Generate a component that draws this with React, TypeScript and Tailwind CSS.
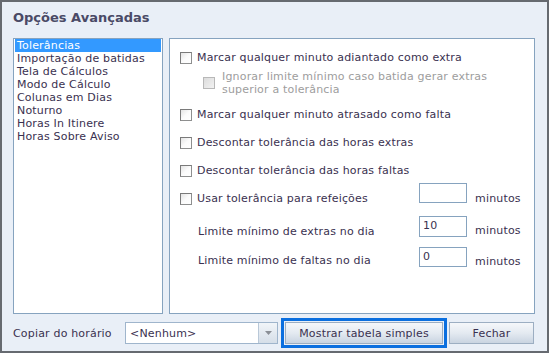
import React from "react";

const font = { fontFamily: '"DejaVu Sans", Verdana, sans-serif' };

function Check({ disabled = false }: { disabled?: boolean }) {
  return disabled ? (
    <span className="inline-block w-[12px] h-[12px] shrink-0 border border-[#b8b8b8] bg-gradient-to-br from-[#dcdcdc] to-[#f2f2f2]" />
  ) : (
    <span className="inline-block w-[12px] h-[12px] shrink-0 border border-[#8e8f8f] border-t-[#7a7a7a] border-l-[#7a7a7a] bg-gradient-to-br from-[#e4e4e4] via-[#fbfbfb] to-white" />
  );
}

const items = [
  "Tolerâncias",
  "Importação de batidas",
  "Tela de Cálculos",
  "Modo de Cálculo",
  "Colunas em Dias",
  "Noturno",
  "Horas In Itinere",
  "Horas Sobre Aviso",
];

export default function App() {
  return (
    <div
      style={font}
      className="w-[549px] h-[353px] bg-[#e9eff7] border-2 border-[#666a70] pl-[11px] pr-[12px] pt-[7px] flex flex-col text-[11px] leading-[13px] tracking-[0.18px] text-[#3a3150] overflow-hidden"
    >
      <div className="text-[13px] leading-[17px] font-bold tracking-normal text-[#4a4a66]">Opções Avançadas</div>
      <div className="mt-[12px] flex gap-[6px] h-[276px]">
        <div className="w-[150px] h-full bg-white border border-[#86a3bf] px-[1px]">
          {items.map((t, i) => (
            <div
              key={t}
              className={
                "h-[13px] pl-[2px] whitespace-nowrap " +
                (i === 0 ? "bg-[#3399ff] text-white" : "")
              }
            >
              {t}
            </div>
          ))}
        </div>
        <div className="w-[366px] h-full bg-white border border-[#86a3bf] pl-[10px] pt-[12px] flex flex-col">
          <div className="flex items-center gap-[5px] h-[13px]">
            <Check />
            <span>Marcar qualquer minuto adiantado como extra</span>
          </div>
          <div className="flex items-center gap-[7px] ml-[23px] mt-[6px]">
            <Check disabled />
            <span className="text-[#9d9d9d]">
              Ignorar limite mínimo caso batida gerar extras
              <br />
              superior a tolerância
            </span>
          </div>
          <div className="flex items-center gap-[5px] h-[13px] mt-[12px]">
            <Check />
            <span>Marcar qualquer minuto atrasado como falta</span>
          </div>
          <div className="flex items-center gap-[5px] h-[13px] mt-[15px]">
            <Check />
            <span>Descontar tolerância das horas extras</span>
          </div>
          <div className="flex items-center gap-[5px] h-[13px] mt-[15px]">
            <Check />
            <span>Descontar tolerância das horas faltas</span>
          </div>
          <div className="flex items-end h-[22px] mt-[6px]">
            <div className="w-[239px] flex items-center gap-[5px] h-[13px]">
              <Check />
              <span>Usar tolerância para refeições</span>
            </div>
            <div className="w-[48px] h-[20px] mb-[2px] border border-[#86a3bf] bg-white" />
            <span className="ml-[8px]">minutos</span>
          </div>
          <div className="flex items-end h-[23px] mt-[10px]">
            <div className="w-[239px] pl-[18px]">Limite mínimo de extras no dia</div>
            <div className="w-[48px] h-[21px] mb-[1px] border border-[#86a3bf] bg-white pl-[3px] pt-[2px]">10</div>
            <span className="ml-[8px] mb-[1px]">minutos</span>
          </div>
          <div className="flex items-end h-[21px] mt-[9px]">
            <div className="w-[239px] pl-[18px] mb-[1px]">Limite mínimo de faltas no dia</div>
            <div className="w-[48px] h-[20px] mb-[1px] border border-[#86a3bf] bg-white pl-[3px] pt-[2px]">0</div>
            <span className="ml-[8px]">minutos</span>
          </div>
        </div>
      </div>
      <div className="mt-[4px] flex items-center h-[30px]">
        <span className="w-[112px] whitespace-nowrap">Copiar do horário</span>
        <div className="w-[153px] h-[22px] flex border border-[#9fb5cc] bg-white">
          <div className="flex-1 pl-[4px] flex items-center">&lt;Nenhum&gt;</div>
          <div className="w-[19px] h-full border-l border-[#b9c8d8] bg-gradient-to-b from-[#f1f5f9] to-[#d5dee8] flex items-center justify-center">
            <svg width="7" height="4" viewBox="0 0 7 4">
              <path d="M0 0 L7 0 L3.5 4 Z" fill="#8a8f96" />
            </svg>
          </div>
        </div>
        <div className="ml-[3px] border-[3px] border-[#0b6fdf] p-[1px]">
          <div className="w-[158px] h-[22px] border border-[#9caec2] bg-gradient-to-b from-[#f5f7fa] via-[#e4eaf1] to-[#c9d4e1] flex items-center justify-center">
            Mostrar tabela simples
          </div>
        </div>
        <div className="ml-[2px] w-[85px] h-[22px] border border-[#9caec2] bg-gradient-to-b from-[#f5f7fa] via-[#e4eaf1] to-[#c9d4e1] flex items-center justify-center">
          Fechar
        </div>
      </div>
    </div>
  );
}
